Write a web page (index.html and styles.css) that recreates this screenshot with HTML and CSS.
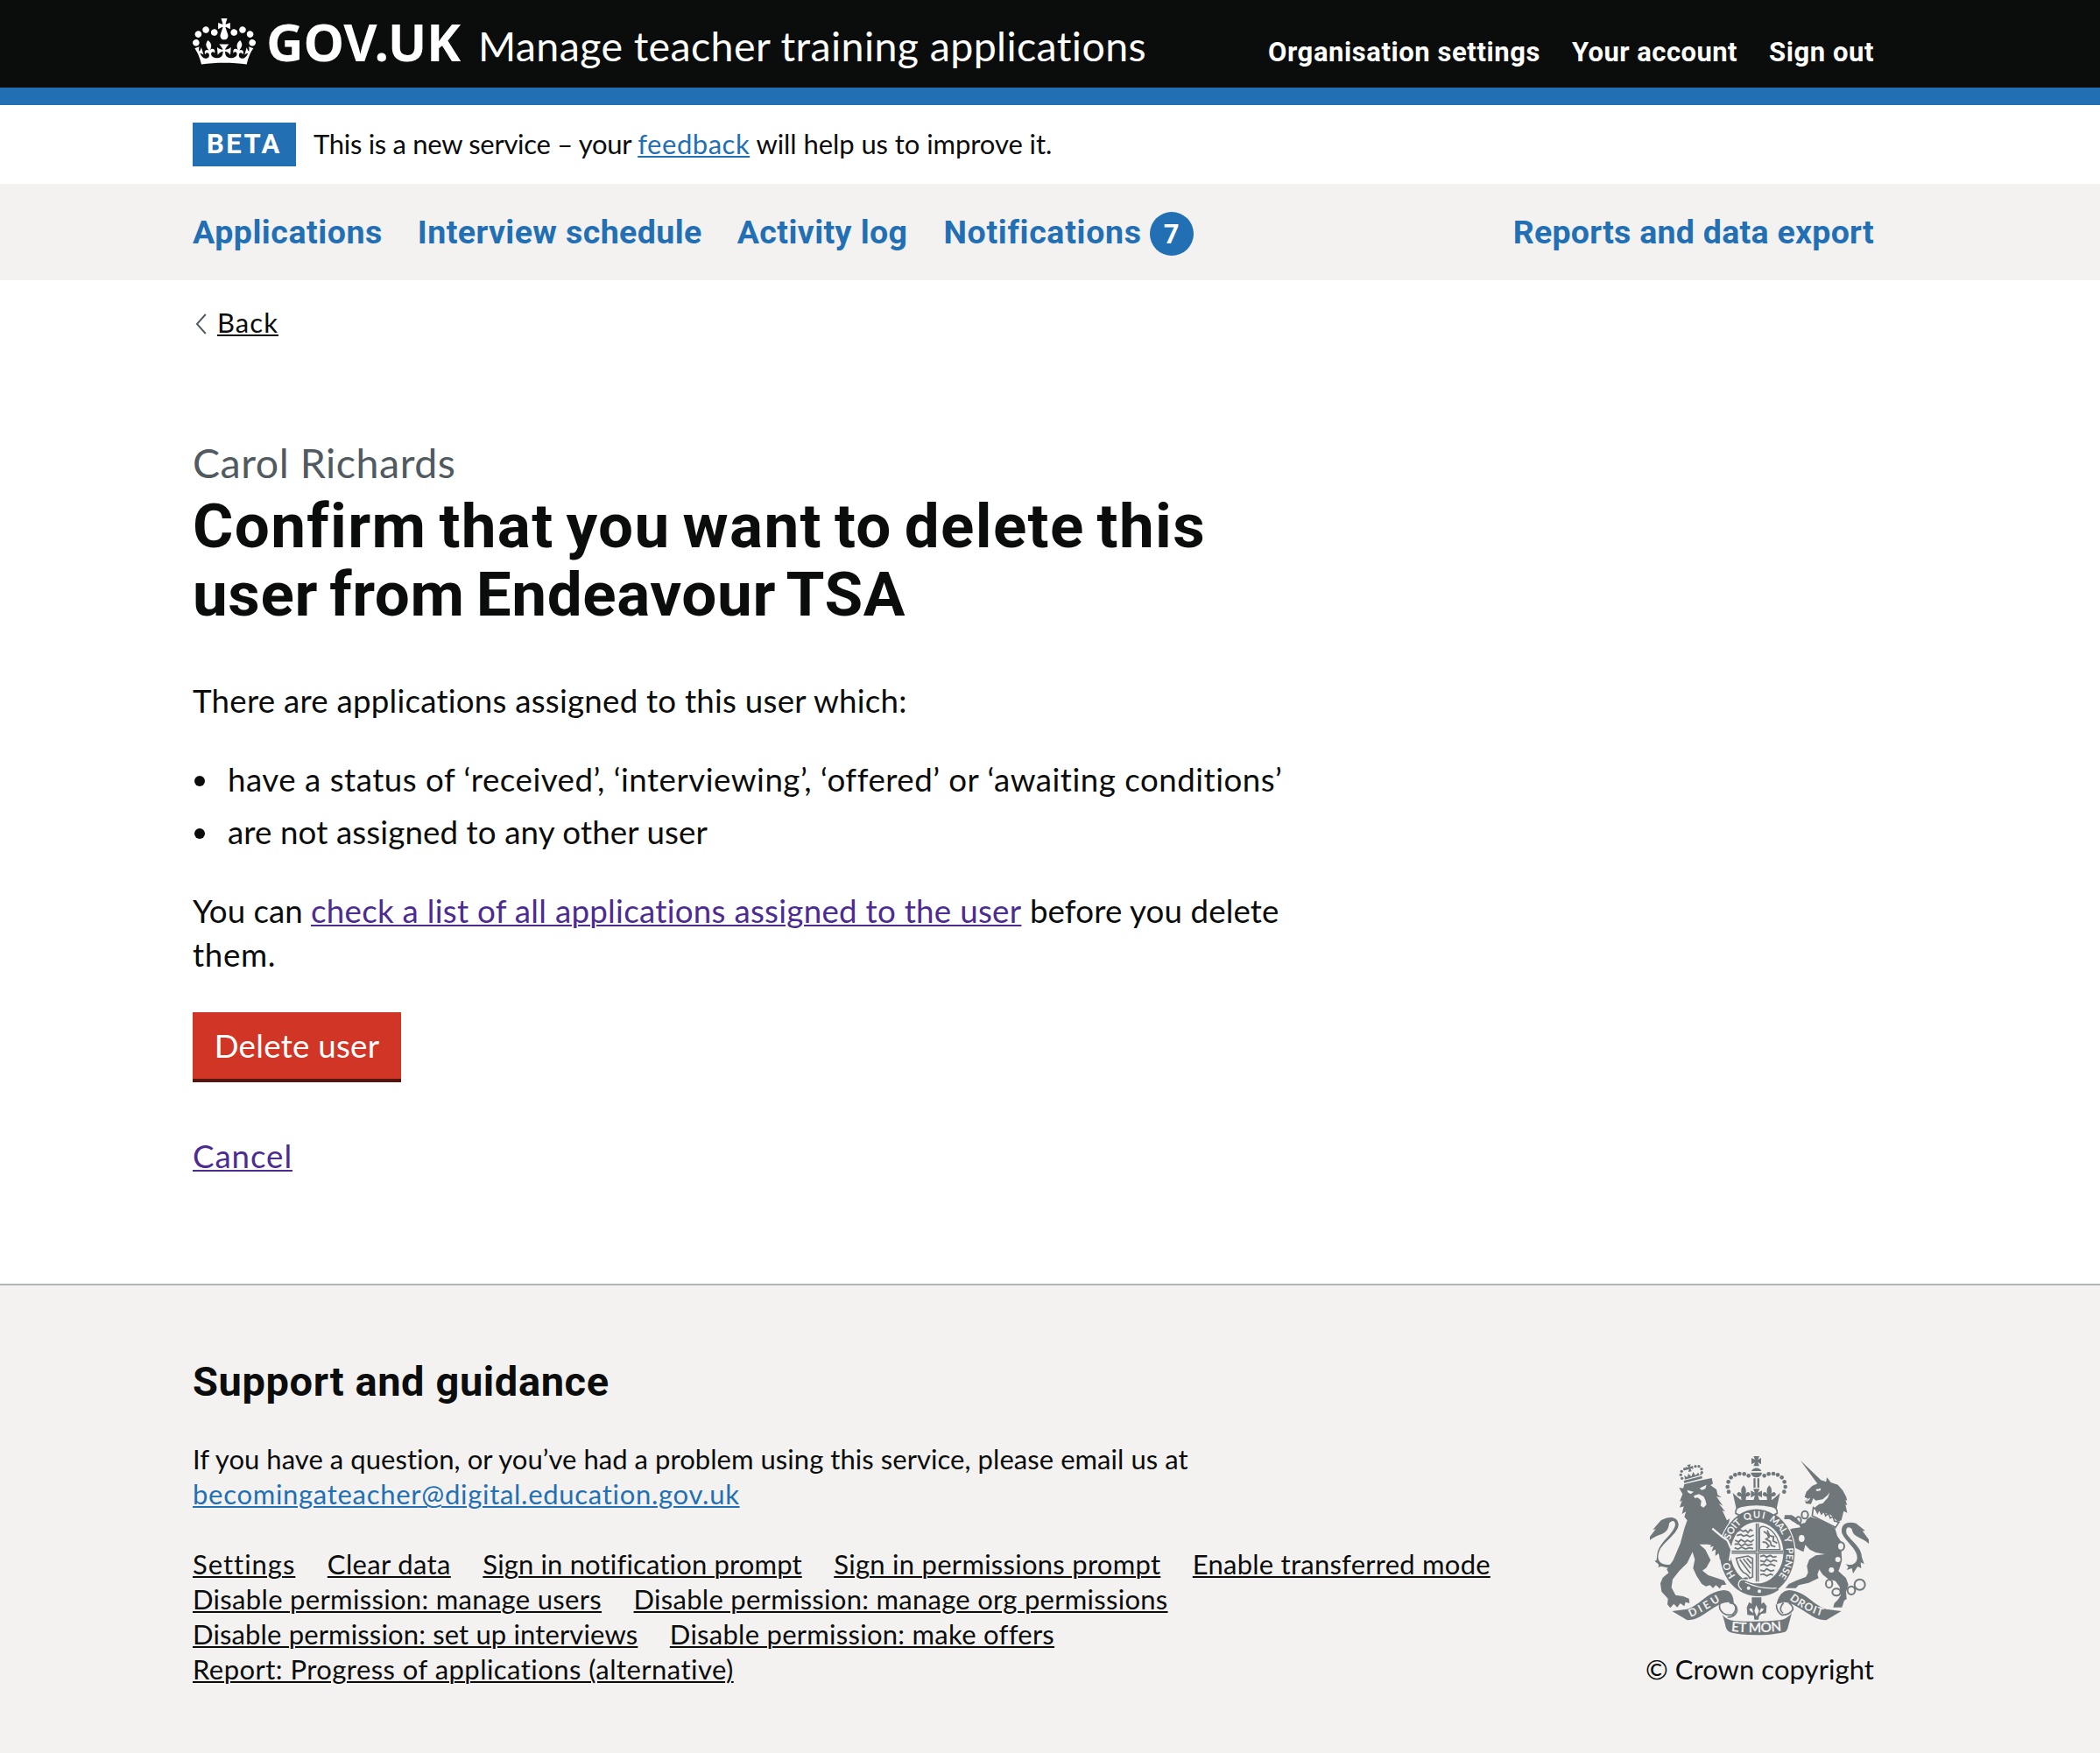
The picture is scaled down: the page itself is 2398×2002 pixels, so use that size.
FILE: index.html
```html
<!DOCTYPE html>
<html lang="en">
<head>
<meta charset="utf-8">
<title>Confirm that you want to delete this user - Manage teacher training applications</title>
<link rel="stylesheet" href="styles.css">
</head>
<body>
<header class="header">
  <div class="container header-inner">
    <a class="logo" href="#">
      <svg class="logo-crown" viewBox="0 0 132 97" aria-hidden="true"><path fill="currentColor" fill-rule="evenodd" d="M25 30.2c3.5 1.5 7.7-.2 9.1-3.7 1.5-3.6-.2-7.8-3.9-9.2-3.6-1.4-7.6.3-9.1 3.9-1.4 3.5.3 7.5 3.9 9zM9 39.5c3.6 1.5 7.8-.2 9.2-3.7 1.5-3.6-.2-7.8-3.9-9.1-3.6-1.5-7.6.2-9.1 3.8-1.4 3.5.3 7.5 3.8 9zM4.4 57.2c3.5 1.5 7.7-.2 9.1-3.8 1.5-3.6-.2-7.7-3.9-9.1-3.5-1.5-7.6.3-9.1 3.8-1.4 3.5.3 7.6 3.9 9.1zm38.3-21.4c3.5 1.5 7.7-.2 9.1-3.8 1.5-3.6-.2-7.7-3.9-9.1-3.6-1.5-7.6.3-9.1 3.8-1.3 3.6.4 7.7 3.9 9.1zm64.4-5.6c-3.6 1.5-7.8-.2-9.1-3.7-1.5-3.6.2-7.8 3.8-9.2 3.6-1.4 7.7.3 9.2 3.9 1.3 3.5-.4 7.5-3.9 9zm15.9 9.3c-3.6 1.5-7.7-.2-9.1-3.7-1.5-3.6.2-7.8 3.7-9.1 3.6-1.5 7.7.2 9.2 3.8 1.5 3.5-.3 7.5-3.8 9zm4.7 17.7c-3.6 1.5-7.8-.2-9.2-3.8-1.5-3.6.2-7.7 3.9-9.1 3.6-1.5 7.7.3 9.2 3.8 1.3 3.5-.4 7.6-3.9 9.1zM89.3 35.8c-3.6 1.5-7.8-.2-9.2-3.8-1.4-3.6.2-7.7 3.9-9.1 3.6-1.5 7.7.3 9.2 3.8 1.4 3.6-.3 7.7-3.9 9.1zM69.7 17.7l8.9 4.7V9.3l-8.9 2.8c-.2-.3-.5-.6-.9-.9L72.4 0H59.6l3.5 11.2c-.3.3-.6.5-.9.9l-8.8-2.8v13.1l8.8-4.7c.3.3.6.7.9.9l-5 15.4v.1c-.2.8-.4 1.6-.4 2.4 0 4.1 3.1 7.5 7 8.1h.2c.3 0 .7.1 1 .1.4 0 .7 0 1-.1h.2c4-.6 7.1-4.1 7.1-8.1 0-.8-.1-1.7-.4-2.4V34l-5.1-15.4c.4-.2.7-.6 1-.9zM66 92.8c16.9 0 32.8 1.1 47.1 3.2 4-16.9 8.9-26.7 14-33.5l-9.6-3.4c1 4.9 1.1 7.2 0 10.2-1.5-1.4-3-4.3-4.2-8.7L108.6 76c2.8-2 5-3.2 7.5-3.3-4.4 9.4-10 11.9-13.6 11.2-4.3-.8-6.3-4.6-5.6-7.9 1-4.7 5.7-5.9 8-.5 4.3-8.7-3-11.4-7.6-8.8 7.1-7.2 7.9-13.5 2.1-21.1-8 6.1-8.1 12.3-4.5 20.8-4.7-5.4-12.1-2.5-9.5 6.2 3.4-5.2 7.9-2 7.2 3.1-.6 4.3-6.4 7.8-13.5 7.2-10.3-.9-10.9-8-11.2-13.8 2.5-.5 7.1 1.8 11 7.3L80.2 60c-4.1 4.4-8 5.3-12.3 5.4 1.4-4.4 8-11.6 8-11.6H55.5s6.4 7.2 7.9 11.6c-4.2-.1-8-1-12.3-5.4l1.4 16.4c3.9-5.5 8.5-7.7 10.9-7.3-.3 5.8-.9 12.8-11.1 13.8-7.2.6-12.9-2.9-13.5-7.2-.7-5 3.8-8.3 7.1-3.1 2.7-8.7-4.6-11.6-9.4-6.2 3.7-8.5 3.6-14.7-4.6-20.8-5.8 7.6-5 13.9 2.2 21.1-4.7-2.6-11.9.1-7.7 8.8 2.3-5.5 7.1-4.2 8.1.5.7 3.3-1.3 7.1-5.7 7.9-3.5.7-9-1.8-13.5-11.2 2.5.1 4.7 1.3 7.5 3.3l-4.7-15.4c-1.2 4.4-2.7 7.2-4.3 8.7-1.1-3-.9-5.3 0-10.2l-9.5 3.4c5 6.9 9.9 16.7 14 33.5 14.8-2.1 30.8-3.2 47.7-3.2z"/></svg>
      <span class="logo-text">GOV.UK</span>
    </a>
    <a class="service-name" href="#">Manage teacher training applications</a>
    <nav class="account-nav">
      <a class="track-wide" href="#">Organisation settings</a>
      <a class="track-mid" href="#">Your account</a>
      <a class="track-wide" href="#">Sign out</a>
    </nav>
  </div>
</header>

<div class="phase">
  <div class="container phase-inner">
    <strong class="tag">BETA</strong>
    <p class="phase-text"><span class="phase-lead">This is a new service – your </span><a class="link phase-link" href="#">feedback</a> will help us to improve it.</p>
  </div>
</div>

<nav class="primary-nav">
  <div class="container primary-nav-inner">
    <a class="nav-applications" href="#">Applications</a>
    <a class="nav-interviews" href="#">Interview schedule</a>
    <a class="nav-activity" href="#">Activity log</a>
    <a class="nav-notifications" href="#">Notifications</a>
    <span class="badge">7</span>
    <a class="nav-reports" href="#">Reports and data export</a>
  </div>
</nav>

<main class="container main">
  <a class="back" href="#"><svg class="back-arrow" viewBox="0 0 12 24" aria-hidden="true"><path d="M11.3 1 1.4 12l9.900 11" fill="none" stroke="#505a5f" stroke-width="1.9"/></svg><span class="back-label">Back</span></a>
  <span class="caption">Carol Richards</span>
  <h1 class="title"><span class="title-first">Confirm that you want to delete this</span><br><span class="title-second">user from Endeavour TSA</span></h1>
  <p class="body intro">There are applications assigned to this user which:</p>
  <ul class="list">
    <li class="item-status">have a status of ‘received’, ‘interviewing’, ‘offered’ or ‘awaiting conditions’</li>
    <li class="item-assigned">are not assigned to any other user</li>
  </ul>
  <p class="body advice"><span class="advice-lead">You can </span><a class="link visited advice-link" href="#">check a list of all applications assigned to the user</a> before you delete<br><span class="advice-end">them.</span></p>
  <button class="button" type="button">Delete user</button>
  <p class="body cancel"><a class="link visited" href="#">Cancel</a></p>
</main>

<footer class="footer">
  <div class="container footer-inner">
    <div class="footer-main">
      <h2 class="footer-title">Support and guidance</h2>
      <p class="footer-text">If you have a question, or you’ve had a problem using this service, please email us at<br><a class="link footer-email" href="#">becomingateacher@digital.education.gov.uk</a></p>
      <ul class="footer-links">
        <li class="links-row"><a class="fl-settings" href="#">Settings</a><a class="fl-clear" href="#">Clear data</a><a class="fl-notification" href="#">Sign in notification prompt</a><a class="fl-permissions" href="#">Sign in permissions prompt</a><a class="fl-enable" href="#">Enable transferred mode</a></li>
        <li class="links-row"><a class="fl-users" href="#">Disable permission: manage users</a><a class="fl-org" href="#">Disable permission: manage org permissions</a></li>
        <li class="links-row"><a class="fl-interviews" href="#">Disable permission: set up interviews</a><a class="fl-offers" href="#">Disable permission: make offers</a></li>
        <li class="links-row"><a class="fl-report" href="#">Report: Progress of applications (alternative)</a></li>
      </ul>
    </div>
    <div class="footer-meta">
      <svg class="crest" viewBox="72 42 750 614" role="img" aria-label="Royal coat of arms">
        <defs>
          <path id="garter" d="M366 452A100 118 0 0 1 340 372A100 118 0 0 1 540 372A100 118 0 0 1 486 477"/>
          <path id="scroll-left" d="M212 594Q262 572 322 533"/>
          <path id="scroll-right" d="M550 532Q600 574 670 592"/>
          <path id="scroll-base" d="M350 642Q437 650 528 640"/>
        </defs>
        <!-- supporters: lion and unicorn -->
        <g class="crest-ink">
          <path d="M172 150L186 152 190 138 240 126 284 117 288 136 280 142 300 156 304 174 318 184 300 180 322 212 308 204 330 232 320 228 336 262 346 256 342 272 352 268 330 298 316 318 336 332 348 362 342 392 332 382 330 400 318 386 312 396 308 374 298 382 300 360 284 368 290 350 278 354 284 344 242 344 262 362 280 398 266 424 252 434 272 450 302 460 326 468 334 482 318 484 312 496 298 484 288 494 278 484 264 488 250 480 232 452 220 426 226 396 218 370 200 408 172 436 150 464 146 492 160 518 186 522 206 530 208 546 194 542 190 556 176 546 166 560 154 548 142 562 132 550 134 530 112 506 108 478 116 458 136 442 130 430 152 398 176 342 190 290 200 262 190 250 196 232 182 240 188 214 174 218 182 194 174 198 184 172Z"/>
          <path d="M150 412C108 420 92 398 104 368C116 336 172 306 170 274C166 248 138 246 110 262L82 294 92 292 72 318 72 330C104 304 134 314 138 272C150 256 162 266 158 282C146 316 104 336 97 378C94 396 98 402 88 400C94 410 108 410 100 424C116 414 124 428 142 424Z"/>
          <path d="M188 126L250 110 252 118 190 134ZM192 122L190 108 200 114 204 102 214 112 220 96 228 108 238 98 242 108 248 96 250 106Z"/>
          <path d="M200 72L212 70 209 79 219 75 221 86 211 84 215 94 204 96 206 86 196 90 194 79 204 81Z"/>
          <path d="M588 57L658 124 676 130 678 114 692 132 716 140 732 158 744 180 748 194 742 192 748 210 742 208 748 236 736 230 728 262 716 266 690 242 640 228 632 222 652 206 664 204 682 184 688 166 680 176 664 190 640 194 632 186 624 206 606 204 604 194 614 188 602 182 608 164 628 144 646 136 640 128Z"/>
          <path d="M622 250L660 262 706 288 714 316 732 342 728 372 730 398 724 420 718 436 744 460 752 482 744 506 746 532 738 536 730 560 700 560 704 546 716 534 726 518 722 490 708 470 682 462 664 448 652 430 646 448 650 460 616 476 582 484 572 494 536 494 548 480 574 468 606 456 614 442 610 418 618 396 640 382 672 378 640 372 620 362 604 346 602 356 598 370 582 362 570 356 558 328 546 314 544 298 558 290 588 286 582 276 562 266 550 258 532 258 534 244 558 244 574 254 590 274 604 270 610 258Z"/>
          <path d="M742 410C758 420 780 412 782 392C786 362 742 336 730 306C724 276 746 264 778 272L810 298 800 298 822 328 822 342C796 318 768 322 764 292C754 280 740 286 746 308C764 336 798 354 798 388L806 412 794 406 796 426 784 420 768 444 764 426 746 432 752 422Z"/>
        </g>
        <!-- crown, garter and fleur-de-lis -->
        <path class="crest-gap" d="M440 224A128 149 0 1 1 439.900 224Z"/>
        <g class="crest-ink">
          <path d="M421 526H454V548L462 542 472 556 470 580 454 582 446 590 444 602 430 602 428 588 406 586 404 560 412 542 421 548Z"/>
          <path d="M427 42H447L442 54 453 48V70L442 63 447 76H427L432 63 420 70V48L432 54ZM418 98H456A19 17 0 0 1 418 98ZM420 93A18 16 0 0 1 454 93ZM427 118H434V150H427ZM440 118H447V150H440Z"/>
          <path d="M356 168L372 182 384 192H490L502 182 518 168 506 222Q437 196 368 222Z"/>
          <path d="M393 142Q406 156 399 172 410 158 416 172 414 182 402 180L400 196H386L384 180Q372 182 370 172 376 158 387 172 380 156 393 142Z"/>
          <path d="M481 142Q494 156 487 172 498 158 504 172 502 182 490 180L488 196H474L472 180Q460 182 458 172 464 158 475 172 468 156 481 142Z"/>
          <path d="M426 154H448L442 167 456 160V184L442 176 448 196H426L432 176 418 184V160L432 167Z"/>
          <path fill-rule="evenodd" d="M440 224A128 149 0 1 1 439.900 224ZM439 268A90 105 0 1 0 439.100 268Z"/>
        </g>
        <!-- lion's paw resting on the garter -->
        <path class="crest-paw" d="M270 300L288 294 318 318 338 332 350 362 344 396 333 384 330 402 318 388 312 398 308 374 296 384 298 350 270 344Z"/>
        <path class="crest-gap" d="M286 290L318 317 338 331 352 362 345 400"/>
        <g class="crest-dots">
          <circle cx="342" cy="164" r="7"/><circle cx="338" cy="147" r="7"/><circle cx="341" cy="130" r="7"/><circle cx="350" cy="115" r="7"/><circle cx="364" cy="106" r="7"/><circle cx="379" cy="102" r="7"/><circle cx="395" cy="103" r="7"/><circle cx="410" cy="109" r="7"/>
          <circle cx="532" cy="164" r="7"/><circle cx="536" cy="147" r="7"/><circle cx="533" cy="130" r="7"/><circle cx="524" cy="115" r="7"/><circle cx="510" cy="106" r="7"/><circle cx="495" cy="102" r="7"/><circle cx="479" cy="103" r="7"/><circle cx="464" cy="109" r="7"/>
          <circle cx="182" cy="118" r="5"/><circle cx="178" cy="106" r="5"/><circle cx="181" cy="94" r="5"/><circle cx="191" cy="86" r="5"/><circle cx="228" cy="77" r="5"/><circle cx="240" cy="77" r="5"/><circle cx="249" cy="86" r="5"/><circle cx="250" cy="98" r="5"/>
        </g>
        <g class="crest-cut">
          <path d="M200 158L222 164 212 172 202 166ZM242 152L266 140 262 154 250 158ZM222 178L240 172 256 180 262 192 266 208 256 218 246 212 248 194 236 184 226 186ZM640 156L658 152 656 160 644 162ZM606 194L622 184 618 192 608 198Z"/>
          <circle cx="694" cy="432" r="9"/><circle cx="716" cy="396" r="9"/>
        </g>
        <path class="crest-collar" d="M632 218L640 224 646 236 652 224 660 240 668 230 674 246 684 238 690 254 700 250 704 264 720 268 708 286 664 264 628 246Z"/>
        <path class="crest-collar" d="M366 238Q364 218 384 214 437 202 490 214 510 218 508 238L496 244Q437 208 378 244Z"/>
        <g class="crest-line">
          <ellipse cx="603" cy="243" rx="11" ry="13"/><ellipse cx="581" cy="262" rx="9" ry="12"/><ellipse cx="592" cy="324" rx="13" ry="15" class="crest-ring"/><ellipse cx="726" cy="351" rx="12" ry="14" class="crest-ring"/><ellipse cx="686" cy="479" rx="11" ry="14"/><ellipse cx="711" cy="508" rx="14" ry="12"/><ellipse cx="762" cy="502" rx="13" ry="14"/><circle cx="791" cy="482" r="18"/>
          <!-- quartered shield -->
          <path d="M440 272V472M352 371H528" stroke-width="11"/>
          <path d="M448 362V290Q452 280 466 284 510 300 518 362Z" stroke-width="4"/>
          <path d="M368 392L408 384 424 392V456L414 460Q408 446 392 440 376 424 368 392ZM380 396L416 444M392 394L418 426M404 392L420 410" stroke-width="5"/>
        </g>
        <path class="crest-fine" d="M440 270V474M350 371H530"/>
        <path class="crest-charge" d="M372 300l10-6 10 6 8-4 8 8 8-10 8 4M370 314l14-4 8 6 12-4 10 6 14-6M364 330l12 6 8-8 14 8 8-6 12 6 10-8M362 344l14-2 10 8 12-8 10 6 16-4M362 356l12 4 12-6 14 6 12-4 14 2M450 386l12-4 10 6 12-6 10 6 12-2M450 400l14 4 8-8 14 8 10-6 12 4M450 416l12-4 12 6 12-6 16 6M450 432l14 4 8-8 14 8 12-4M450 448l12-2 10 6 14-6 8 4M462 300l12 8 6 12-10 6 14 8 4 14 14 4M474 296l8 18 14 4-2 14 14 8M458 336l12 2 10 12-8 6"/>
        <!-- buckle and strap -->
        <path class="crest-ink" d="M384 470Q440 504 508 494L514 500Q470 530 424 518 396 512 372 498 362 488 366 472 372 458 388 462 404 452 410 462Z"/>
        <path class="crest-strap" d="M406 468Q384 460 378 472 370 484 386 500M398 474Q450 498 506 494"/>
        <g class="crest-cut"><circle cx="410" cy="494" r="6"/><circle cx="447" cy="505" r="6"/><path d="M436 552L446 572 438 592 430 572ZM412 566Q424 556 426 580L416 572ZM462 566Q450 556 448 580L458 572Z"/></g>
        <!-- motto scroll -->
        <g class="crest-ink">
          <path d="M148 573L200 566C246 552 266 506 326 501C352 502 358 522 360 548L344 542C320 542 296 556 272 574C248 590 230 604 200 604Z"/>
          <path d="M728 573L676 566C630 552 608 506 550 501C522 502 510 528 506 550L530 542C552 542 576 556 602 574C628 590 644 604 676 604Z"/>
          <path d="M320 586Q336 604 360 606 437 612 516 604 540 602 558 580L544 632Q540 644 528 646 490 655 437 655 380 655 348 646 336 642 332 628Q326 600 320 586Z"/>
        </g>
        <g class="crest-line"><path d="M360 548Q374 566 356 584 338 590 324 580 306 566 312 548M344 544Q374 548 370 574 362 594 338 594M506 550Q504 572 524 586 548 588 562 568 562 552 548 546M530 544Q510 566 528 580" stroke-width="5"/></g>
        <g class="crest-motto">
          <text font-size="33"><textPath href="#garter" startOffset="0" textLength="54">HO</textPath></text>
          <text font-size="33"><textPath href="#garter" startOffset="128" textLength="72">SOIT</textPath></text>
          <text font-size="33"><textPath href="#garter" startOffset="213" textLength="68">QUI</textPath></text>
          <text font-size="33"><textPath href="#garter" startOffset="298" textLength="68">MAL</textPath></text>
          <text font-size="33"><textPath href="#garter" startOffset="376">Y</textPath></text>
          <text font-size="33"><textPath href="#garter" startOffset="412" textLength="104">PENSE</textPath></text>
          <text font-size="37"><textPath href="#scroll-left" textLength="116">DIEU</textPath></text>
          <text font-size="37"><textPath href="#scroll-right" textLength="126">DROIT</textPath></text>
          <text font-size="46"><textPath href="#scroll-base" textLength="174">ET MON</textPath></text>
        </g>
      </svg>
      <a class="copyright" href="#">© Crown copyright</a>
    </div>
  </div>
</footer>
</body>
</html>
```
FILE: styles.css
```css
* { box-sizing: border-box; }

body {
  margin: 0;
  background: #fff;
  color: #0b0c0c;
  font-family: Lato, "Noto Sans", sans-serif;
  font-size: 31px;
  line-height: 40px;
  font-kerning: normal;
}

p, h1, h2, ul { margin: 0; padding: 0; font-weight: inherit; }
ul { list-style: none; }
a { color: inherit; text-decoration: none; }

.container { padding: 0 258px 0 220px; }

.link, .back-label, .links-row a {
  text-decoration: underline;
  text-decoration-thickness: 2px;
  text-underline-offset: 2px;
}
.link { color: #2270b3; }
.visited { color: #4c2c92; }

/* Header */
.header { background: #0b0c0c; color: #fff; border-bottom: 20px solid #2270b3; }
.header-inner { display: flex; align-items: baseline; height: 100px; padding-top: 17px; }
.logo { display: flex; gap: 12px; align-items: baseline; }
.logo-crown { width: 72px; height: 53px; align-self: flex-start; margin-top: 4px; }
.logo-text { font: 700 59px/60px "Noto Sans", sans-serif; letter-spacing: -0.23px; }
.service-name { margin-left: 20px; font-size: 46.5px; line-height: 60px; letter-spacing: 0.39px; white-space: nowrap; }
.account-nav { display: flex; gap: 36px; margin-left: auto; font-family: Roboto, sans-serif; font-weight: 700; white-space: nowrap; }
.track-wide { letter-spacing: 0.57px; }
.track-mid { letter-spacing: 0.44px; }

/* Phase banner */
.phase-inner { display: flex; align-items: flex-start; gap: 20px; height: 90px; padding-top: 20px; }
.tag {
  width: 118px; height: 50px; padding-left: 16px;
  background: #2270b3; color: #fff;
  font: 700 31px/50px Roboto, sans-serif; letter-spacing: 2.5px;
}
.phase-text { margin-top: 4px; letter-spacing: -0.07px; white-space: pre; }
.phase-lead { letter-spacing: -0.3px; }
.phase-link { letter-spacing: 0.53px; }

/* Primary navigation */
.primary-nav { background: #f3f2f1; }
.primary-nav-inner {
  display: flex; align-items: flex-start; height: 110px; padding-top: 30px;
  color: #2270b3; font: 700 37.5px/51px Roboto, sans-serif; white-space: nowrap;
}
.nav-applications { margin-right: 40px; letter-spacing: 0.54px; }
.nav-interviews { margin-right: 40px; letter-spacing: 0.42px; }
.nav-activity { margin-right: 41px; letter-spacing: 0.42px; }
.nav-notifications { margin-right: 9px; letter-spacing: 0.69px; }
.nav-reports { margin-left: auto; letter-spacing: 0.27px; }
.badge {
  width: 50px; height: 50px; margin-top: 2px; border-radius: 50%;
  background: #2270b3; color: #fff; font-size: 31px; text-align: center;
}

/* Main content */
.main { display: flex; flex-direction: column; align-items: flex-start; padding-top: 28px; padding-bottom: 121px; }
.back { display: flex; align-items: center; gap: 12px; padding-left: 3px; }
.back-arrow { width: 13px; height: 24px; margin-top: 4px; }
.back-label { letter-spacing: 1.06px; }
.caption { margin-top: 110px; color: #505a5f; font-size: 46.5px; line-height: 60px; letter-spacing: 0.55px; }
.title { margin-top: 4px; margin-bottom: -1px; font: 700 71px/78px Roboto, sans-serif; white-space: nowrap; word-spacing: -5px; }
.title-first { letter-spacing: 1.34px; }
.title-second { letter-spacing: 0.6px; }
.body { font-size: 36.7px; line-height: 50px; white-space: pre; }
.intro { margin-top: 58px; letter-spacing: 0.23px; }
.list { margin-top: 40px; font-size: 36.7px; line-height: 50px; }
.list li { display: flex; white-space: nowrap; }
.list li + li { margin-top: 10px; }
.list li::before { content: ""; flex: none; width: 12px; height: 12px; margin: 21px 26px 0 2px; border-radius: 50%; background: #0b0c0c; }
.item-status { letter-spacing: 0.5px; }
.item-assigned { letter-spacing: 0.11px; }
.advice { margin-top: 40px; letter-spacing: 0.12px; }
.advice-lead { letter-spacing: -0.02px; }
.advice-link { letter-spacing: 0.28px; }
.advice-end { letter-spacing: 0.63px; }
.button {
  width: 238px; height: 76px; margin-top: 41px; padding: 0; border: 0;
  background: #d03526; color: #fff; box-shadow: 0 4px 0 #55150f;
  font: 400 36.7px/50px Lato, sans-serif; letter-spacing: 0.25px;
}
.cancel { margin-top: 63px; letter-spacing: 0.93px; }

/* Footer */
.footer { border-top: 2px solid #b1b4b6; background: #f3f2f1; }
.footer-inner { display: flex; justify-content: space-between; align-items: flex-end; padding-top: 80px; padding-bottom: 76px; }
.footer-title { font: 700 47px/60px Roboto, sans-serif; letter-spacing: 0.6px; }
.footer-text { margin-top: 38px; letter-spacing: 0.05px; white-space: nowrap; }
.footer-email { letter-spacing: 0.71px; }
.footer-links { margin-top: 40px; }
.links-row { display: flex; gap: 36.5px; white-space: nowrap; }
.fl-settings { letter-spacing: 0.98px; }
.fl-clear { letter-spacing: 0.35px; }
.fl-notification { letter-spacing: 0.15px; }
.fl-permissions { letter-spacing: 0.27px; }
.fl-enable { letter-spacing: 0.24px; }
.fl-users { letter-spacing: 0.32px; }
.fl-org { letter-spacing: 0.28px; }
.fl-interviews { letter-spacing: 0.14px; }
.fl-offers { letter-spacing: 0.27px; }
.fl-report { letter-spacing: 0.45px; }
.footer-meta { display: flex; flex-direction: column; align-items: center; gap: 18px; }
.copyright { letter-spacing: 0.06px; white-space: nowrap; }

/* Coat of arms */
.crest { width: 250px; height: 204.7px; }
.crest-ink, .crest-dots, .crest-paw { fill: #6f777b; }
.crest-cut { fill: #f3f2f1; }
.crest-gap { fill: none; stroke: #f3f2f1; stroke-width: 7; }
.crest-line { fill: none; stroke: #6f777b; stroke-width: 6; }
.crest-ring { fill: #f3f2f1; }
.crest-collar { fill: #f3f2f1; stroke: #6f777b; stroke-width: 5; }
.crest-fine { fill: none; stroke: #f3f2f1; stroke-width: 2; }
.crest-charge { fill: none; stroke: #6f777b; stroke-width: 5.5; }
.crest-strap { fill: none; stroke: #f3f2f1; stroke-width: 4; }
.crest-motto { fill: #f3f2f1; font-family: Lato, sans-serif; font-weight: 700; }
```
